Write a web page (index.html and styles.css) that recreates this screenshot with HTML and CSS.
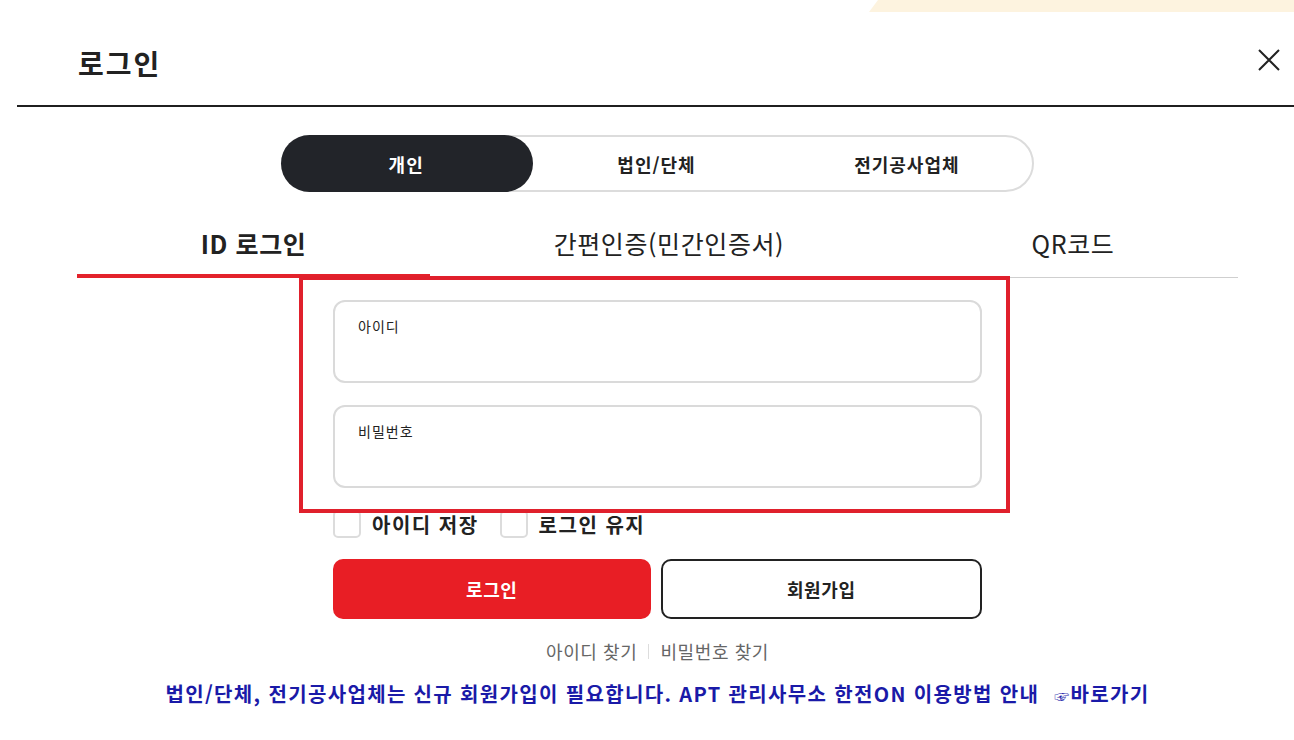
FILE: index.html
```html
<!DOCTYPE html>
<html lang="ko">

<head>
    <meta charset="UTF-8">
    <meta name="viewport" content="width=device-width, initial-scale=1.0">
    <title>로그인</title>
    <link rel="stylesheet" href="styles.css">
</head>

<body>
    <div class="bg-deco"></div>

    <div class="modal">
        <header class="modal-head">
            <h1 class="modal-title">로그인</h1>
            <button class="close-btn" type="button" aria-label="닫기">
                <svg width="22" height="22" viewBox="0 0 22 22">
                    <path d="M1 1 L21 21 M21 1 L1 21" stroke="#222" stroke-width="2" fill="none" />
                </svg>
            </button>
        </header>

        <!-- 회원 구분 -->
        <div class="seg">
            <div class="seg-item on">개인</div>
            <div class="seg-item">법인/단체</div>
            <div class="seg-item">전기공사업체</div>
        </div>

        <!-- 로그인 방식 -->
        <ul class="tabs">
            <li class="tab on">ID 로그인</li>
            <li class="tab">간편인증(민간인증서)</li>
            <li class="tab">QR코드</li>
        </ul>

        <form class="login-form">
            <label class="field">
                <span class="field-label">아이디</span>
                <input type="text">
            </label>
            <label class="field">
                <span class="field-label">비밀번호</span>
                <input type="password">
            </label>

            <div class="check-row">
                <label class="check"><span class="box"></span>아이디 저장</label>
                <label class="check"><span class="box"></span>로그인 유지</label>
            </div>

            <div class="btn-row">
                <button type="button" class="btn btn-login">로그인</button>
                <button type="button" class="btn btn-join">회원가입</button>
            </div>

            <div class="find-links">
                <a href="#">아이디 찾기</a>
                <span class="bar"></span>
                <a href="#">비밀번호 찾기</a>
            </div>
        </form>

        <p class="notice">법인/단체, 전기공사업체는 신규 회원가입이 필요합니다. APT 관리사무소 한전ON 이용방법 안내 <span class="hand">☞</span>바로가기</p>
    </div>

    <div class="highlight"></div>
</body>

</html>
```

FILE: styles.css
```css
/* 기본 */
html,
body {
    margin: 0;
    padding: 0;
}

body {
    font-family: "Noto Sans CJK KR", "Noto Sans", sans-serif;
    background-color: #fff;
    color: #222;
    width: 1294px;
    height: 740px;
    overflow: hidden;
    position: relative;
}

/* 뒤쪽 배경 장식 */
.bg-deco {
    position: absolute;
    top: 0;
    left: 869px;
    width: 425px;
    height: 12px;
    background-color: #fdf3df;
    clip-path: polygon(9px 0, 100% 0, 100% 100%, 0 100%);
}

/* 모달 */
.modal {
    position: relative;
    margin-left: 17px;
    width: 1281px;
}

.modal-head {
    display: flex;
    justify-content: space-between;
    align-items: center;
    height: 107px;
    box-sizing: border-box;
    padding: 14px 18px 0 61px;
    border-bottom: 2px solid #1f1f1f;
}

.modal-title {
    margin: 8px 0 0;
    font-size: 28px;
    font-weight: 700;
    line-height: 1.4;
    letter-spacing: 2px;
}

.close-btn {
    border: none;
    background: none;
    padding: 0;
    width: 22px;
    height: 22px;
    cursor: pointer;
}

.close-btn svg {
    display: block;
}

/* 회원 구분 */
.seg {
    display: flex;
    width: 753px;
    height: 57px;
    box-sizing: border-box;
    margin: 28px auto 0;
    border: 2px solid #dcdcdc;
    border-radius: 30px;
}

.seg-item {
    flex: 1;
    display: flex;
    align-items: center;
    justify-content: center;
    font-size: 18px;
    font-weight: 700;
    letter-spacing: 1px;
    color: #222;
}

.seg-item.on {
    margin: -2px -2px -2px -2px;
    padding-right: 2px;
    background-color: #222429;
    color: #fff;
    border-radius: 30px;
}

/* 탭 */
.tabs {
    display: flex;
    list-style: none;
    margin: 20px 60px 0;
    padding: 0;
    border-bottom: 1px solid #cfcfcf;
}

.tab {
    flex: 1 1 auto;
    height: 62px;
    display: flex;
    align-items: center;
    justify-content: center;
    font-size: 25px;
    font-weight: 400;
    letter-spacing: 0.6px;
    color: #222;
    border-bottom: 4px solid transparent;
    margin-bottom: -1px;
}

.tab.on {
    font-weight: 700;
    border-bottom-color: #e3222b;
}

/* 입력 폼 */
.login-form {
    width: 649px;
    margin: 22px auto 0;
}

.field {
    display: block;
    height: 83px;
    box-sizing: border-box;
    padding: 14px 23px 0;
    border: 2px solid #dadada;
    border-radius: 12px;
    margin-bottom: 22px;
}

.field-label {
    display: block;
    font-size: 14px;
    line-height: 20px;
    letter-spacing: 1px;
    color: #222;
}

.field input {
    display: block;
    width: 100%;
    border: none;
    outline: none;
    padding: 0;
    margin-top: 6px;
    height: 28px;
    font-size: 16px;
    background: transparent;
}

.check-row {
    display: flex;
    gap: 21px;
    height: 28px;
}

.check {
    display: flex;
    align-items: center;
    gap: 11px;
    font-size: 20px;
    font-weight: 700;
    letter-spacing: 1.5px;
    color: #222;
}

.check .box {
    width: 28px;
    height: 28px;
    box-sizing: border-box;
    border: 2px solid #dcdcdc;
    border-radius: 5px;
}

.btn-row {
    display: flex;
    gap: 10px;
    margin-top: 21px;
}

.btn {
    flex: 1;
    height: 60px;
    border-radius: 10px;
    font-family: inherit;
    font-size: 18px;
    font-weight: 700;
    letter-spacing: 0.6px;
    cursor: pointer;
}

.btn-login {
    background-color: #e81e25;
    border: none;
    color: #fff;
}

.btn-join {
    background-color: #fff;
    border: 2px solid #222;
    color: #222;
}

.find-links {
    display: flex;
    justify-content: center;
    align-items: center;
    margin-top: 21px;
    line-height: 22px;
    font-size: 18px;
    letter-spacing: 0.6px;
}

.find-links a {
    color: #666;
    text-decoration: none;
}

.find-links .bar {
    width: 1px;
    height: 15px;
    background-color: #ddd;
    margin: 0 11px;
}

/* 안내 */
.notice {
    margin: 20px 0 0;
    text-align: center;
    font-size: 20px;
    font-weight: 700;
    line-height: 24px;
    letter-spacing: 1.35px;
    color: #1a1aa8;
}

.notice .hand {
    font-size: 15px;
    margin-left: 8px;
}

/* 강조 표시 */
.highlight {
    position: absolute;
    left: 299px;
    top: 276px;
    width: 711px;
    height: 237px;
    box-sizing: border-box;
    border: 4px solid #e0202c;
    pointer-events: none;
}
```
